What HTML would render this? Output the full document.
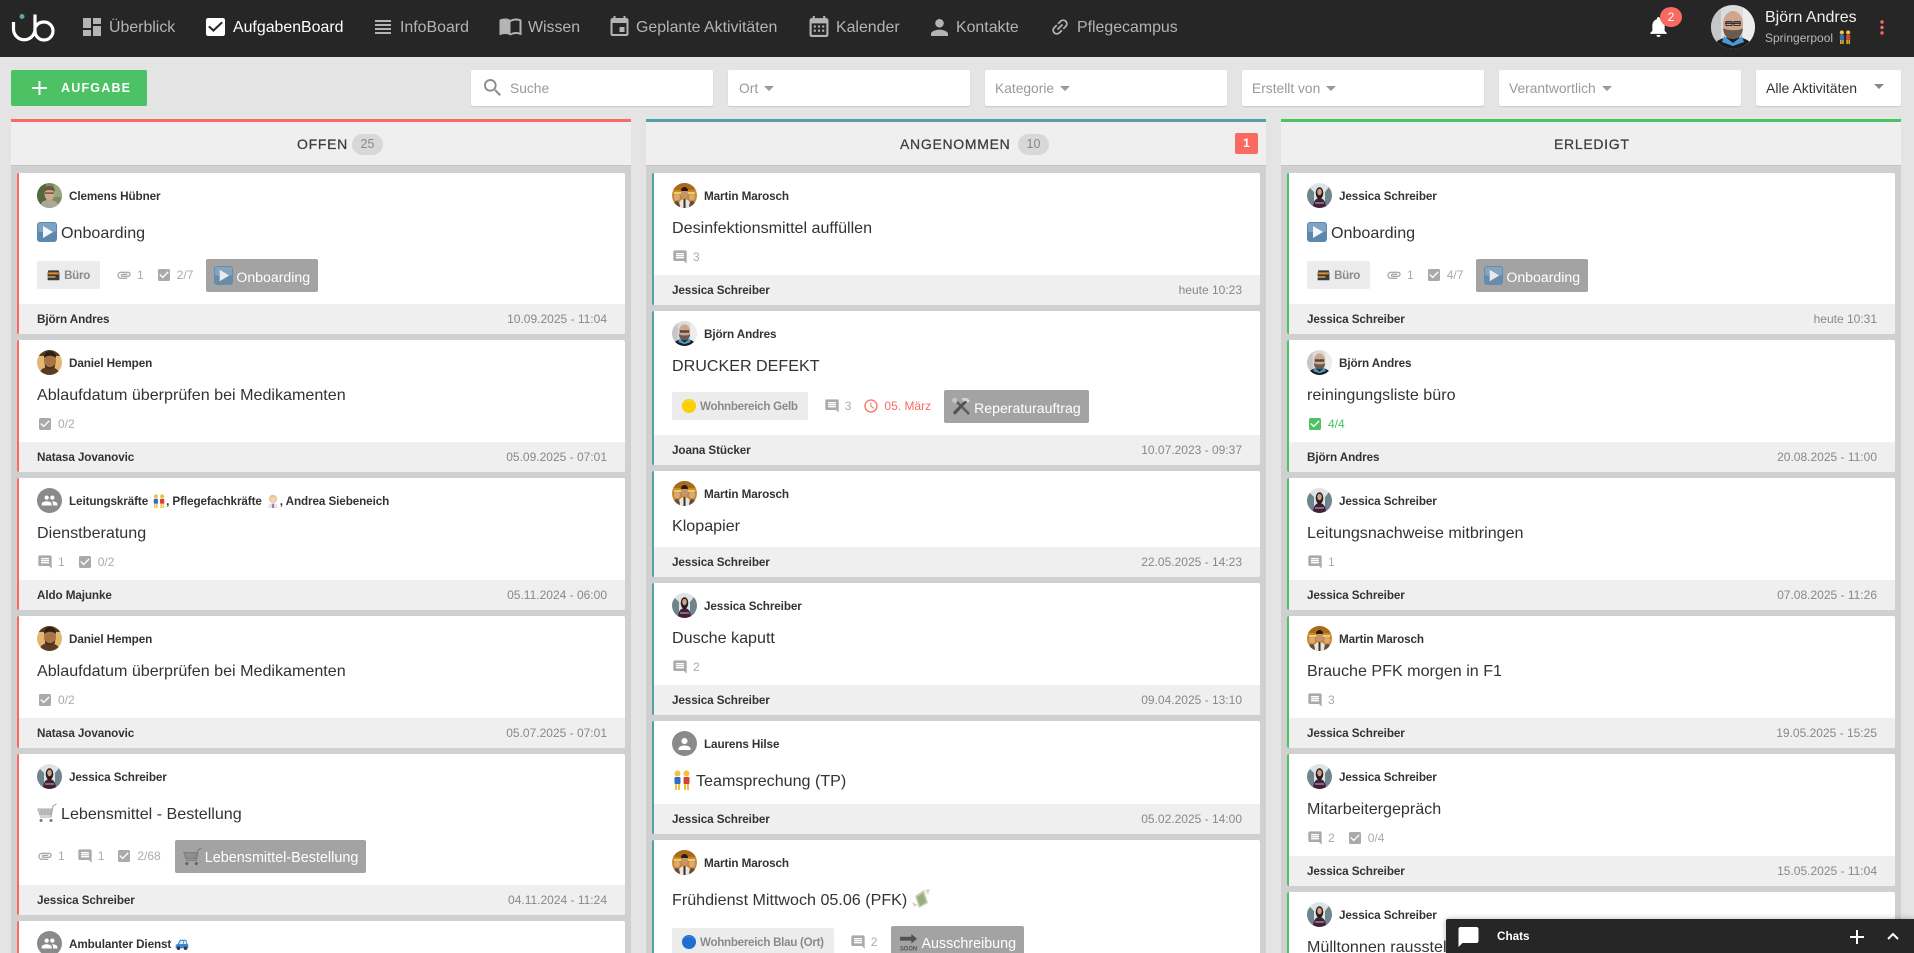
<!DOCTYPE html>
<html lang="de"><head><meta charset="utf-8"><title>AufgabenBoard</title>
<style>
*{box-sizing:border-box}
html,body{margin:0;padding:0;width:1914px;height:953px;overflow:hidden;background:#e4e4e4;font-family:"Liberation Sans",Arial,sans-serif;color:#333}
#page{position:relative;width:1914px;height:953px;overflow:hidden;background:#e4e4e4}
.a{position:absolute}
#top{position:absolute;left:0;top:0;width:1914px;height:57px;background:#262626}
.nt{position:absolute;top:18px;line-height:20px;font-size:15.9px;color:#b4b4b4;white-space:nowrap}
.ni{position:absolute;fill:#b4b4b4}
.box{position:absolute;top:70px;height:36px;background:#fff;border-radius:2px;box-shadow:0 1px 1px #c8c8c8;font-size:13.8px;line-height:37px;color:#999;white-space:nowrap;padding-left:10px}
.car{display:inline-block;width:0;height:0;border:5px solid transparent;border-top:5px solid #999;border-bottom:0;margin-left:6px;vertical-align:2px}
.col{position:absolute;top:119px;width:620px;height:834px;background:#d0d0d0;border-top:3px solid}
.ch{position:absolute;left:0;top:0;width:100%;height:44px;background:#efefef;border-bottom:1px solid #c6c6c6}
.ct{position:absolute;top:13px;font-size:14px;line-height:18px;color:#3c3c3c;letter-spacing:.7px;white-space:nowrap;-webkit-text-stroke:.25px #3c3c3c}
.bd{position:absolute;top:12px;width:31px;height:21px;border-radius:11px;background:#d8d8d8;color:#888;font-size:12.5px;line-height:21px;text-align:center}
.c{position:absolute;width:608px;background:#fff;border-radius:2px;overflow:hidden;border-left:2px solid}
.c1{left:17px;border-left-color:#f96a60}.c2{left:652px;border-left-color:#559fa9}.c3{left:1287px;border-left-color:#4cc264}
.av{position:absolute;left:18px;top:10px;width:25px;height:25px;border-radius:50%;display:block}
.n{position:absolute;left:50px;top:11px;line-height:25px;font-size:11.7px;font-weight:700;color:#333;white-space:nowrap;letter-spacing:-.1px}
.n svg{width:14px;height:18px;vertical-align:-5px;margin:0 0 0 4px}
.t{position:absolute;left:18px;font-size:16.1px;line-height:20px;color:#333;white-space:nowrap;display:flex;align-items:center;transform:translateY(1px)}
.t svg{width:20px;height:20px;margin-right:4px;transform:translateY(-1px)}
.r{position:absolute;left:18px;height:16px;display:flex;align-items:center;font-size:12px;color:#aaa;white-space:nowrap}
.it{display:flex;align-items:center;margin-right:12px}
.it svg{width:16px;height:16px;margin-right:5px;fill:#aaa;flex:none}
.tg{display:flex;align-items:center;height:28px;padding:0 10px;background:#ececec;border-radius:2px;margin-right:16px;color:#8a8a8a;font-size:11.6px;font-weight:700;letter-spacing:-.28px;flex:none}
.tg svg{width:14px;height:14px;margin-right:4px}
.dt{display:flex;align-items:center;height:33px;padding:0 8px;background:#a3a3a3;border-radius:2px;margin-left:1px;color:#fff;font-size:14.1px;flex:none}
.dt svg{width:19px;height:19px;margin-right:3px;opacity:.85}
.dt span{position:relative;top:2px}
.f{position:absolute;left:0;right:0;bottom:0;height:30px;background:#efefef;line-height:31px;padding:0 18px;font-size:11.7px;font-weight:700;color:#333;letter-spacing:-.1px}
.f i{position:absolute;right:18px;top:0;line-height:30px;font-style:normal;font-weight:400;font-size:12px;color:#888;letter-spacing:0}
</style></head><body>
<div id="page">
<svg width="0" height="0" style="position:absolute">
<defs>
<symbol id="dash" viewBox="3 3 18 18"><path d="M3 13h8V3H3v10zm0 8h8v-6H3v6zm10 0h8V11h-8v10zm0-18v6h8V3h-8z"/></symbol>
<symbol id="check" viewBox="0 0 24 24"><path d="M19 3H5c-1.11 0-2 .9-2 2v14c0 1.1.89 2 2 2h14c1.11 0 2-.9 2-2V5c0-1.1-.89-2-2-2zm-9 14l-5-5 1.41-1.41L10 14.17l7.59-7.59L19 8l-9 9z"/></symbol>
<symbol id="lines" viewBox="4 5 16 14"><path d="M4 15h16v-2H4v2zm0 4h16v-2H4v2zm0-8h16V9H4v2zm0-6v2h16V5H4z"/></symbol>
<symbol id="book" viewBox="1 4 22 18"><path d="M21 5c-1.11-.35-2.33-.5-3.5-.5-1.95 0-4.05.4-5.5 1.5-1.45-1.1-3.55-1.5-5.5-1.5S2.45 4.9 1 6v14.65c0 .25.25.5.5.5.1 0 .15-.05.25-.05C3.1 20.45 5.05 20 6.5 20c1.95 0 4.05.4 5.5 1.5 1.35-.85 3.8-1.5 5.5-1.5 1.65 0 3.35.3 4.75 1.05.1.05.15.05.25.05.25 0 .5-.25.5-.5V6c-.6-.45-1.25-.75-2-1zm0 13.5c-1.1-.35-2.3-.5-3.5-.5-1.7 0-4.15.65-5.5 1.5V8c1.35-.85 3.8-1.5 5.5-1.5 1.2 0 2.4.15 3.5.5v11.5z"/></symbol>
<symbol id="event" viewBox="3 1 18 20"><path d="M17 12h-5v5h5v-5zM16 1v2H8V1H6v2H5c-1.11 0-1.99.9-1.99 2L3 19c0 1.1.89 2 2 2h14c1.1 0 2-.9 2-2V5c0-1.1-.9-2-2-2h-1V1h-2zm3 18H5V8h14v11z"/></symbol>
<symbol id="cal" viewBox="3 1 18 20"><path d="M16 1v2H8V1H6v2H5c-1.11 0-1.99.9-1.99 2L3 19c0 1.1.89 2 2 2h14c1.1 0 2-.9 2-2V5c0-1.1-.9-2-2-2h-1V1h-2zm3 18H5V8h14v11zM7 10h2v2H7zm4 0h2v2h-2zm4 0h2v2h-2zM7 14h2v2H7zm4 0h2v2h-2zm4 0h2v2h-2z"/></symbol>
<symbol id="person" viewBox="4 4 16 16"><path d="M12 12c2.21 0 4-1.79 4-4s-1.79-4-4-4-4 1.79-4 4 1.79 4 4 4zm0 2c-2.67 0-8 1.34-8 4v2h16v-2c0-2.66-5.33-4-8-4z"/></symbol>
<symbol id="link" viewBox="2 2 20 20"><g transform="rotate(-45 12 12)"><path d="M3.9 12c0-1.71 1.39-3.1 3.1-3.1h4V7H7c-2.76 0-5 2.24-5 5s2.24 5 5 5h4v-1.9H7c-1.71 0-3.1-1.39-3.1-3.1zM8 13h8v-2H8v2zm9-6h-4v1.9h4c1.71 0 3.1 1.39 3.1 3.1s-1.39 3.1-3.1 3.1h-4V17h4c2.76 0 5-2.24 5-5s-2.24-5-5-5z"/></g></symbol>
<symbol id="bell" viewBox="4 2.5 16 19.5"><path d="M12 22c1.1 0 2-.9 2-2h-4c0 1.1.89 2 2 2zm6-6v-5c0-3.07-1.64-5.64-4.5-6.32V4c0-.83-.67-1.5-1.5-1.5s-1.5.67-1.5 1.5v.68C7.63 5.36 6 7.92 6 11v5l-2 2v1h16v-1l-2-2z"/></symbol>
<symbol id="search" viewBox="3 3 17.5 17.5"><path d="M15.5 14h-.79l-.28-.27C15.41 12.59 16 11.11 16 9.5 16 5.91 13.09 3 9.5 3S3 5.91 3 9.5 5.91 16 9.5 16c1.61 0 3.09-.59 4.23-1.57l.27.28v.79l5 4.99L20.49 19l-4.99-5zm-6 0C7.01 14 5 11.99 5 9.5S7.01 5 9.5 5 14 7.01 14 9.5 11.99 14 9.5 14z"/></symbol>
<symbol id="msg" viewBox="0 0 24 24"><path d="M21.99 4c0-1.1-.89-2-1.99-2H4c-1.1 0-2 .9-2 2v12c0 1.1.9 2 2 2h14l4 4-.01-18zM18 14H6v-2h12v2zm0-3H6V9h12v2zm0-3H6V6h12v2z"/></symbol>
<symbol id="clip" viewBox="0 0 24 24"><path d="M2 12.5C2 9.46 4.46 7 7.5 7H18c2.21 0 4 1.79 4 4s-1.79 4-4 4H9.5C8.12 15 7 13.88 7 12.5S8.12 10 9.5 10H17v2H9.41c-.55 0-.55 1 0 1H18c1.1 0 2-.9 2-2s-.9-2-2-2H7.5C5.57 9 4 10.57 4 12.5S5.57 16 7.5 16H17v2H7.5C4.46 18 2 15.54 2 12.5z"/></symbol>
<symbol id="clock" viewBox="0 0 24 24"><path d="M11.99 2C6.47 2 2 6.48 2 12s4.47 10 9.99 10C17.52 22 22 17.52 22 12S17.52 2 11.99 2zM12 20c-4.42 0-8-3.58-8-8s3.58-8 8-8 8 3.58 8 8-3.58 8-8 8zm.5-13H11v6l5.25 3.15.75-1.23-4.5-2.67z"/></symbol>
<symbol id="chat" viewBox="2 2 20 20"><path d="M20 2H4c-1.1 0-1.99.9-1.99 2L2 22l4-4h14c1.1 0 2-.9 2-2V4c0-1.1-.9-2-2-2z"/></symbol>

<symbol id="e-play" viewBox="0 0 20 20"><rect width="20" height="20" rx="3" fill="#5c88ad"/><rect x="1" y="1" width="18" height="9" rx="2" fill="#7fa3c2"/><path d="M6 4l10 6-10 6z" fill="#f4f7fa"/></symbol>
<symbol id="e-buero" viewBox="0 0 20 20"><path d="M2 3h16l1 4v11H1V7z" fill="#3a3a3a"/><rect x="2" y="6" width="16" height="3" fill="#e8912c"/><rect x="1" y="12" width="12" height="2" fill="#d9b36a"/></symbol>
<symbol id="e-couple" viewBox="0 0 20 20"><circle cx="5.5" cy="3.5" r="3" fill="#f0c13c"/><circle cx="14.5" cy="3.5" r="3" fill="#f0c13c"/><rect x="2.5" y="7" width="6" height="7" rx="1" fill="#2f6fc0"/><rect x="11.5" y="7" width="6" height="7" rx="1" fill="#d8402f"/><rect x="3" y="14" width="2" height="6" fill="#f0c13c"/><rect x="6" y="14" width="2" height="6" fill="#f0c13c"/><rect x="12" y="14" width="2" height="6" fill="#f0c13c"/><rect x="15" y="14" width="2" height="6" fill="#f0c13c"/></symbol>
<symbol id="e-nurse" viewBox="0 0 20 20"><circle cx="10" cy="7" r="6" fill="#e8c98a"/><circle cx="10" cy="8" r="4" fill="#f4d3b4"/><path d="M3 20c0-5 3-7 7-7s7 2 7 7z" fill="#e8e2ea"/><rect x="8.5" y="14" width="3" height="6" fill="#a07ab8"/></symbol>
<symbol id="e-car" viewBox="0 0 20 20"><path d="M1 16v-5l3-1 3-6h9l2 6 1 1v5z" fill="#3f86cc"/><path d="M8 5.5h3.5V10H6zM12.500 5.500H15.500l1 4.500h-4z" fill="#d6ecff"/><circle cx="5" cy="16" r="2.5" fill="#333"/><circle cx="15" cy="16" r="2.5" fill="#333"/></symbol>
<symbol id="e-cart" viewBox="0 0 20 20"><g fill="none" stroke="#a8a8a8" stroke-width="1.1"><path d="M19.500 1L16 3l-2 11H3"/><path d="M1 6h14l-1.500 6H3z" fill="#d6d6d6"/><path d="M3 8h11M3 10h11M5 6v6M8 6v6M11 6v6" stroke="#9c9c9c" stroke-width=".7"/></g><circle cx="4" cy="17.500" r="1.500" fill="#777"/><circle cx="14" cy="17.500" r="1.500" fill="#777"/></symbol>
<symbol id="e-cart2" viewBox="0 0 20 20"><g fill="none" stroke="#777" stroke-width="1.2"><path d="M19.500 1L16 3l-2 11H3"/><path d="M1 6h14l-1.500 6H3z" fill="#8d8d8d"/></g><circle cx="4" cy="17.500" r="1.600" fill="#555"/><circle cx="14" cy="17.500" r="1.600" fill="#555"/></symbol>
<symbol id="e-tools" viewBox="0 0 20 20"><path d="M2 4l2-2 15 15-2 2z" fill="#555"/><path d="M18 3l-2-2-15 15 2 3z" fill="#444"/><path d="M10 1h6l3 3-2 2-3-2-2 1z" fill="#ddd"/><circle cx="3" cy="3.500" r="2.800" fill="#ccc"/></symbol>
<symbol id="e-soon" viewBox="0 0 20 20"><path d="M1 4h12V1l6 5-6 5V8H1z" fill="#444"/><text x="10" y="18.500" font-size="7" font-weight="700" font-family="Liberation Sans" fill="#444" text-anchor="middle" textLength="18" lengthAdjust="spacingAndGlyphs">SOON</text></symbol>
<symbol id="e-money" viewBox="0 0 20 20"><path d="M4 7L13 1l4 13-9 5z" fill="#c2cfae"/><path d="M6 8l6-4 3 9-6 4z" fill="#95ad80"/><path d="M14 1l5-1-2 6zM1 13l2 5 4-2z" fill="#d8d4c4"/></symbol>
<symbol id="e-yellow" viewBox="0 0 20 20"><circle cx="10" cy="10" r="10" fill="#fbd000"/><path d="M2 6a10 10 0 0 1 16 0 12 12 0 0 0-16 0z" fill="#ffe45a"/></symbol>
<symbol id="e-blue" viewBox="0 0 20 20"><circle cx="10" cy="10" r="10" fill="#1f6fd0"/><path d="M2 6a10 10 0 0 1 16 0 12 12 0 0 0-16 0z" fill="#4f98ea"/></symbol>

<symbol id="a-clemens" viewBox="0 0 25 25"><rect width="25" height="25" fill="#7d8a62"/><rect x="0" y="0" width="9" height="25" fill="#55683f"/><rect x="17" y="0" width="8" height="14" fill="#9aa67e"/><path d="M3 25c0-6 4-8 9-8s10 2 10 8z" fill="#a8a89c"/><ellipse cx="12.500" cy="11" rx="5" ry="6.500" fill="#d4a987"/><path d="M7 9c0-5 3-6 6-6s5 2 5 6c-2-2-8-3-11 0z" fill="#6d5842"/><rect x="8" y="9.500" width="9" height="1.200" fill="#444"/></symbol>
<symbol id="a-daniel" viewBox="0 0 25 25"><rect width="25" height="25" fill="#e2b870"/><rect x="0" y="0" width="25" height="6" fill="#5a3c22"/><path d="M2 25c1-6 5-8 10-8s10 2 11 8z" fill="#5a3c22"/><ellipse cx="13" cy="11" rx="6" ry="8" fill="#a97448"/><path d="M7 8c0-6 4-7 6-7s6 1 6 7c-3-3-9-3-12 0z" fill="#2f2015"/><path d="M8 14c2 4 8 4 10 0v3c-3 3-8 3-10 0z" fill="#4a3020"/></symbol>
<symbol id="a-jessica" viewBox="0 0 25 25"><rect width="25" height="25" fill="#dde4e6"/><path d="M0 9l3-4 4 4v16H0zM18 9l4-5 3 5v16h-7z" fill="#6f858e"/><path d="M6 25c0-7 3-10 6.500-10S19 18 19 25z" fill="#40203a"/><ellipse cx="12.500" cy="10" rx="3.800" ry="5.800" fill="#2a1d1d"/><ellipse cx="12.500" cy="9" rx="2.300" ry="3.200" fill="#cfa084"/><rect x="8" y="19" width="9" height="2" fill="#8a6a78"/></symbol>
<symbol id="a-martin" viewBox="0 0 25 25"><rect width="25" height="25" fill="#c88a2a"/><rect y="0" width="25" height="7" fill="#a96a1c"/><rect x="2" y="9" width="21" height="2" fill="#f2d060"/><path d="M6 25c0-6 3-9 6.500-9s6.500 3 6.500 9z" fill="#e8e4e0"/><rect x="11.500" y="16" width="2" height="9" fill="#333"/><ellipse cx="12.500" cy="11" rx="3.500" ry="4.500" fill="#c8946a"/><path d="M9 8c0-3 2-4 3.500-4S16 5 16 8z" fill="#2a1a10"/><ellipse cx="5" cy="14" rx="3" ry="3.500" fill="#d8a880"/><ellipse cx="20" cy="14" rx="3" ry="3.500" fill="#d8a880"/><path d="M1 25c0-5 2-7 4-7s3 3 3 7zM17 25c0-4 1-7 3-7s4 2 4 7z" fill="#6a4a3a"/></symbol>
<symbol id="a-bjorn" viewBox="0 0 44 44"><rect width="44" height="44" fill="#dcdcdc"/><rect x="0" y="0" width="10" height="44" fill="#c4c6c8"/><rect x="32" y="0" width="12" height="44" fill="#ececec"/><path d="M2 44c1-9 10-12 20-12s19 3 20 12z" fill="#1c1c1c"/><path d="M13 31l9 7 9-7 2 6-11 4-11-4z" fill="#4a9bd4"/><ellipse cx="22" cy="19" rx="10" ry="13" fill="#cfa58c"/><path d="M12 23c1 9 5 11 10 11s9-2 10-11c-2 3-17 3-20 0z" fill="#6a5a50"/><rect x="14" y="17.500" width="16" height="1.500" fill="#333"/><rect x="15" y="16.500" width="6" height="4" fill="none" stroke="#333"/><rect x="23" y="16.500" width="6" height="4" fill="none" stroke="#333"/></symbol>
<symbol id="a-group" viewBox="0 0 25 25"><rect width="25" height="25" fill="#8a8a8a"/><g transform="translate(4 4) scale(.71)" fill="#fff"><path d="M16 11c1.660 0 2.990-1.340 2.990-3S17.660 5 16 5c-1.660 0-3 1.340-3 3s1.340 3 3 3zm-8 0c1.660 0 2.990-1.340 2.990-3S9.660 5 8 5C6.340 5 5 6.340 5 8s1.340 3 3 3zm0 2c-2.330 0-7 1.170-7 3.500V19h14v-2.500c0-2.330-4.670-3.500-7-3.500zm8 0c-.29 0-.62.02-.97.05 1.160.84 1.970 1.970 1.970 3.450V19h6v-2.500c0-2.330-4.670-3.500-7-3.500z"/></g></symbol>
<symbol id="a-person" viewBox="0 0 25 25"><rect width="25" height="25" fill="#8a8a8a"/><g transform="translate(3.500 4) scale(.75)" fill="#fff"><path d="M12 12c2.210 0 4-1.790 4-4s-1.790-4-4-4-4 1.790-4 4 1.790 4 4 4zm0 2c-2.670 0-8 1.340-8 4v2h16v-2c0-2.660-5.330-4-8-4z"/></g></symbol>
</defs></svg>

<div id="top">
<svg class="a" style="left:11px;top:13px" width="44" height="29" viewBox="0 0 44 29"><circle cx="11" cy="3.500" r="2.500" fill="#5aa5ad"/><path d="M2.500 9v7a10.750 10.750 0 0 0 21.500 0" fill="none" stroke="#fff" stroke-width="3.200"/><path d="M24 1.500V18a9 9 0 1 0 9-9c-4 0-7 2-8.400 5" fill="none" stroke="#fff" stroke-width="3.200"/></svg>
<svg class="ni" style="left:83px;top:18px" width="18" height="18"><use href="#dash"/></svg><div class="nt" style="left:109px">Überblick</div>
<svg class="a" style="left:206px;top:18px;fill:#fff" width="19" height="18" viewBox="3 3 18 18" preserveAspectRatio="none"><path d="M19 3H5c-1.110 0-2 .9-2 2v14c0 1.100.89 2 2 2h14c1.110 0 2-.9 2-2V5c0-1.100-.89-2-2-2zm-9 14l-5-5 1.410-1.410L10 14.170l7.590-7.590L19 8l-9 9z"/></svg><div class="nt" style="left:233px;color:#fff">AufgabenBoard</div>
<svg class="ni" style="left:375px;top:20px" width="16" height="14"><use href="#lines"/></svg><div class="nt" style="left:400px">InfoBoard</div>
<svg class="ni" style="left:499px;top:18px" width="23" height="18"><use href="#book"/></svg><div class="nt" style="left:528px">Wissen</div>
<svg class="ni" style="left:610px;top:16px" width="19" height="20"><use href="#event"/></svg><div class="nt" style="left:636px">Geplante Aktivitäten</div>
<svg class="ni" style="left:809px;top:16px" width="20" height="21"><use href="#cal"/></svg><div class="nt" style="left:836px">Kalender</div>
<svg class="ni" style="left:931px;top:19px" width="17" height="17"><use href="#person"/></svg><div class="nt" style="left:956px">Kontakte</div>
<svg class="ni" style="left:1051px;top:18px" width="18" height="18"><use href="#link"/></svg><div class="nt" style="left:1077px">Pflegecampus</div>
<svg class="a" style="left:1650px;top:17px;fill:#fff" width="17" height="20"><use href="#bell"/></svg>
<div class="a" style="left:1660px;top:7px;width:22px;height:20px;border-radius:50%;background:#f96a60;color:#fff;font-size:12px;line-height:20px;text-align:center">2</div>
<svg class="a" style="left:1711px;top:5px;border-radius:50%" width="44" height="44"><use href="#a-bjorn"/></svg>
<div class="a" style="left:1765px;top:8px;font-size:16px;line-height:20px;color:#f0f0f0;white-space:nowrap">Björn Andres</div>
<div class="a" style="left:1765px;top:30px;font-size:12px;line-height:16px;color:#b8b8b8;white-space:nowrap">Springerpool</div>
<svg class="a" style="left:1838px;top:30px" width="14" height="14"><use href="#e-couple"/></svg>
<svg class="a" style="left:1879px;top:19px" width="6" height="17"><circle cx="3" cy="3" r="1.700" fill="#f96a60"/><circle cx="3" cy="8.500" r="1.700" fill="#f96a60"/><circle cx="3" cy="14" r="1.700" fill="#f96a60"/></svg>
</div>

<div class="a" style="left:11px;top:70px;width:136px;height:36px;background:#4cc264;border-radius:2px"></div>
<svg class="a" style="left:32px;top:81px;fill:none;stroke:#fff;stroke-width:2" width="15" height="14"><path d="M7.500 0v14M0 7h15"/></svg>
<div class="a" style="left:61px;top:70px;line-height:36px;font-size:12.500px;font-weight:700;color:#fff;letter-spacing:1.200px">AUFGABE</div>

<div class="box" style="left:471px;width:242px;padding-left:39px">Suche</div>
<svg class="a" style="left:484px;top:79px;fill:#8c8c8c" width="17" height="17"><use href="#search"/></svg>
<div class="box" style="left:728px;width:242px;padding-left:11px">Ort<span class="car"></span></div>
<div class="box" style="left:985px;width:242px">Kategorie<span class="car"></span></div>
<div class="box" style="left:1242px;width:242px">Erstellt von<span class="car"></span></div>
<div class="box" style="left:1499px;width:242px">Verantwortlich<span class="car"></span></div>
<div class="box" style="left:1756px;width:145px;color:#333;font-size:14px">Alle Aktivitäten</div>
<span class="a car" style="left:1874px;top:84px;margin:0;border-top-color:#888"></span>

<div class="col" style="left:11px;border-top-color:#f96a60"><div class="ch"><div class="ct" style="left:286px">OFFEN</div><div class="bd" style="left:341px">25</div></div></div>
<div class="col" style="left:646px;border-top-color:#559fa9"><div class="ch"><div class="ct" style="left:254px">ANGENOMMEN</div><div class="bd" style="left:372px">10</div><div class="a" style="left:589px;top:11px;width:23px;height:21px;background:#f96a60;border-radius:2px;color:#fff;font-size:12px;font-weight:700;line-height:21px;text-align:center">1</div></div></div>
<div class="col" style="left:1281px;border-top-color:#4cc264"><div class="ch"><div class="ct" style="left:273px">ERLEDIGT</div></div></div>

<!-- Spalte 1 -->
<div class="c c1" style="top:173px;height:161px"><svg class="av"><use href="#a-clemens"/></svg><div class="n">Clemens Hübner</div><div class="t" style="top:49px"><svg><use href="#e-play"/></svg>Onboarding</div>
<div class="r" style="top:94px"><div class="tg" style="width:63px"><svg><use href="#e-buero"/></svg>Büro</div><div class="it"><svg><use href="#clip"/></svg>1</div><div class="it"><svg><use href="#check"/></svg>2/7</div><div class="dt"><svg><use href="#e-play"/></svg><span>Onboarding</span></div></div>
<div class="f">Björn Andres<i>10.09.2025 - 11:04</i></div></div>

<div class="c c1" style="top:340px;height:132px"><svg class="av"><use href="#a-daniel"/></svg><div class="n">Daniel Hempen</div><div class="t" style="top:44px">Ablaufdatum überprüfen bei Medikamenten</div>
<div class="r" style="top:76px"><div class="it"><svg><use href="#check"/></svg>0/2</div></div>
<div class="f">Natasa Jovanovic<i>05.09.2025 - 07:01</i></div></div>

<div class="c c1" style="top:478px;height:132px"><svg class="av"><use href="#a-group"/></svg><div class="n">Leitungskräfte<svg><use href="#e-couple"/></svg>, Pflegefachkräfte<svg><use href="#e-nurse"/></svg>, Andrea Siebeneich</div><div class="t" style="top:44px">Dienstberatung</div>
<div class="r" style="top:76px"><div class="it"><svg><use href="#msg"/></svg>1</div><div class="it"><svg><use href="#check"/></svg>0/2</div></div>
<div class="f">Aldo Majunke<i>05.11.2024 - 06:00</i></div></div>

<div class="c c1" style="top:616px;height:132px"><svg class="av"><use href="#a-daniel"/></svg><div class="n">Daniel Hempen</div><div class="t" style="top:44px">Ablaufdatum überprüfen bei Medikamenten</div>
<div class="r" style="top:76px"><div class="it"><svg><use href="#check"/></svg>0/2</div></div>
<div class="f">Natasa Jovanovic<i>05.07.2025 - 07:01</i></div></div>

<div class="c c1" style="top:754px;height:161px"><svg class="av"><use href="#a-jessica"/></svg><div class="n">Jessica Schreiber</div><div class="t" style="top:49px"><svg><use href="#e-cart"/></svg>Lebensmittel - Bestellung</div>
<div class="r" style="top:94px"><div class="it"><svg><use href="#clip"/></svg>1</div><div class="it"><svg><use href="#msg"/></svg>1</div><div class="it"><svg><use href="#check"/></svg>2/68</div><div class="dt" style="margin-left:2px;font-size:14.4px"><svg><use href="#e-cart2"/></svg><span>Lebensmittel-Bestellung</span></div></div>
<div class="f">Jessica Schreiber<i>04.11.2024 - 11:24</i></div></div>

<div class="c c1" style="top:921px;height:32px;border-radius:2px 2px 0 0"><svg class="av"><use href="#a-group"/></svg><div class="n">Ambulanter Dienst<svg><use href="#e-car"/></svg></div></div>

<!-- Spalte 2 -->
<div class="c c2" style="top:173px;height:132px"><svg class="av"><use href="#a-martin"/></svg><div class="n">Martin Marosch</div><div class="t" style="top:44px">Desinfektionsmittel auffüllen</div>
<div class="r" style="top:76px"><div class="it"><svg><use href="#msg"/></svg>3</div></div>
<div class="f">Jessica Schreiber<i>heute 10:23</i></div></div>

<div class="c c2" style="top:311px;height:154px"><svg class="av"><use href="#a-bjorn"/></svg><div class="n">Björn Andres</div><div class="t" style="top:44px">DRUCKER DEFEKT</div>
<div class="r" style="top:87px"><div class="tg"><svg><use href="#e-yellow"/></svg>Wohnbereich Gelb</div><div class="it"><svg><use href="#msg"/></svg>3</div><div class="it" style="color:#f96a60"><svg style="fill:#f96a60"><use href="#clock"/></svg>05. März</div><div class="dt"><svg><use href="#e-tools"/></svg><span>Reperaturauftrag</span></div></div>
<div class="f">Joana Stücker<i>10.07.2023 - 09:37</i></div></div>

<div class="c c2" style="top:471px;height:106px"><svg class="av"><use href="#a-martin"/></svg><div class="n">Martin Marosch</div><div class="t" style="top:44px">Klopapier</div>
<div class="f">Jessica Schreiber<i>22.05.2025 - 14:23</i></div></div>

<div class="c c2" style="top:583px;height:132px"><svg class="av"><use href="#a-jessica"/></svg><div class="n">Jessica Schreiber</div><div class="t" style="top:44px">Dusche kaputt</div>
<div class="r" style="top:76px"><div class="it"><svg><use href="#msg"/></svg>2</div></div>
<div class="f">Jessica Schreiber<i>09.04.2025 - 13:10</i></div></div>

<div class="c c2" style="top:721px;height:113px"><svg class="av"><use href="#a-person"/></svg><div class="n">Laurens Hilse</div><div class="t" style="top:49px"><svg><use href="#e-couple"/></svg>Teamsprechung (TP)</div>
<div class="f">Jessica Schreiber<i>05.02.2025 - 14:00</i></div></div>

<div class="c c2" style="top:840px;height:113px;border-radius:2px 2px 0 0"><svg class="av"><use href="#a-martin"/></svg><div class="n">Martin Marosch</div><div class="t" style="top:49px">Frühdienst Mittwoch 05.06 (PFK)<svg style="margin:0 0 0 4px"><use href="#e-money"/></svg></div>
<div class="r" style="top:94px"><div class="tg"><svg><use href="#e-blue"/></svg>Wohnbereich Blau (Ort)</div><div class="it"><svg><use href="#msg"/></svg>2</div><div class="dt" style="margin-left:2px;font-size:14.3px"><svg><use href="#e-soon"/></svg><span>Ausschreibung</span></div></div>
</div>

<!-- Spalte 3 -->
<div class="c c3" style="top:173px;height:161px"><svg class="av"><use href="#a-jessica"/></svg><div class="n">Jessica Schreiber</div><div class="t" style="top:49px"><svg><use href="#e-play"/></svg>Onboarding</div>
<div class="r" style="top:94px"><div class="tg" style="width:63px"><svg><use href="#e-buero"/></svg>Büro</div><div class="it"><svg><use href="#clip"/></svg>1</div><div class="it"><svg><use href="#check"/></svg>4/7</div><div class="dt"><svg><use href="#e-play"/></svg><span>Onboarding</span></div></div>
<div class="f">Jessica Schreiber<i>heute 10:31</i></div></div>

<div class="c c3" style="top:340px;height:132px"><svg class="av"><use href="#a-bjorn"/></svg><div class="n">Björn Andres</div><div class="t" style="top:44px">reiningungsliste büro</div>
<div class="r" style="top:76px"><div class="it" style="color:#4cc264"><svg style="fill:#4cc264"><use href="#check"/></svg>4/4</div></div>
<div class="f">Björn Andres<i>20.08.2025 - 11:00</i></div></div>

<div class="c c3" style="top:478px;height:132px"><svg class="av"><use href="#a-jessica"/></svg><div class="n">Jessica Schreiber</div><div class="t" style="top:44px">Leitungsnachweise mitbringen</div>
<div class="r" style="top:76px"><div class="it"><svg><use href="#msg"/></svg>1</div></div>
<div class="f">Jessica Schreiber<i>07.08.2025 - 11:26</i></div></div>

<div class="c c3" style="top:616px;height:132px"><svg class="av"><use href="#a-martin"/></svg><div class="n">Martin Marosch</div><div class="t" style="top:44px">Brauche PFK morgen in F1</div>
<div class="r" style="top:76px"><div class="it"><svg><use href="#msg"/></svg>3</div></div>
<div class="f">Jessica Schreiber<i>19.05.2025 - 15:25</i></div></div>

<div class="c c3" style="top:754px;height:132px"><svg class="av"><use href="#a-jessica"/></svg><div class="n">Jessica Schreiber</div><div class="t" style="top:44px">Mitarbeitergepräch</div>
<div class="r" style="top:76px"><div class="it"><svg><use href="#msg"/></svg>2</div><div class="it"><svg><use href="#check"/></svg>0/4</div></div>
<div class="f">Jessica Schreiber<i>15.05.2025 - 11:04</i></div></div>

<div class="c c3" style="top:892px;height:61px;border-radius:2px 2px 0 0"><svg class="av"><use href="#a-jessica"/></svg><div class="n">Jessica Schreiber</div><div class="t" style="top:44px">Mülltonnen rausstellen</div></div>

<!-- Chats -->
<div class="a" style="left:1446px;top:919px;width:468px;height:34px;background:#262626;border-radius:2px 0 0 0;box-shadow:0 0 6px rgba(0,0,0,.3)"></div>
<svg class="a" style="left:1458px;top:927px;fill:#fff" width="21" height="20"><use href="#chat"/></svg>
<div class="a" style="left:1497px;top:927px;line-height:20px;font-size:11.700px;font-weight:700;color:#fff">Chats</div>
<svg class="a" style="left:1850px;top:930px;fill:none;stroke:#fff;stroke-width:2" width="14" height="14"><path d="M7 0v14M0 7h14"/></svg>
<svg class="a" style="left:1887px;top:932px;fill:none;stroke:#fff;stroke-width:2" width="12" height="8"><path d="M1 7l5-5 5 5"/></svg>
</div>
</body></html>
